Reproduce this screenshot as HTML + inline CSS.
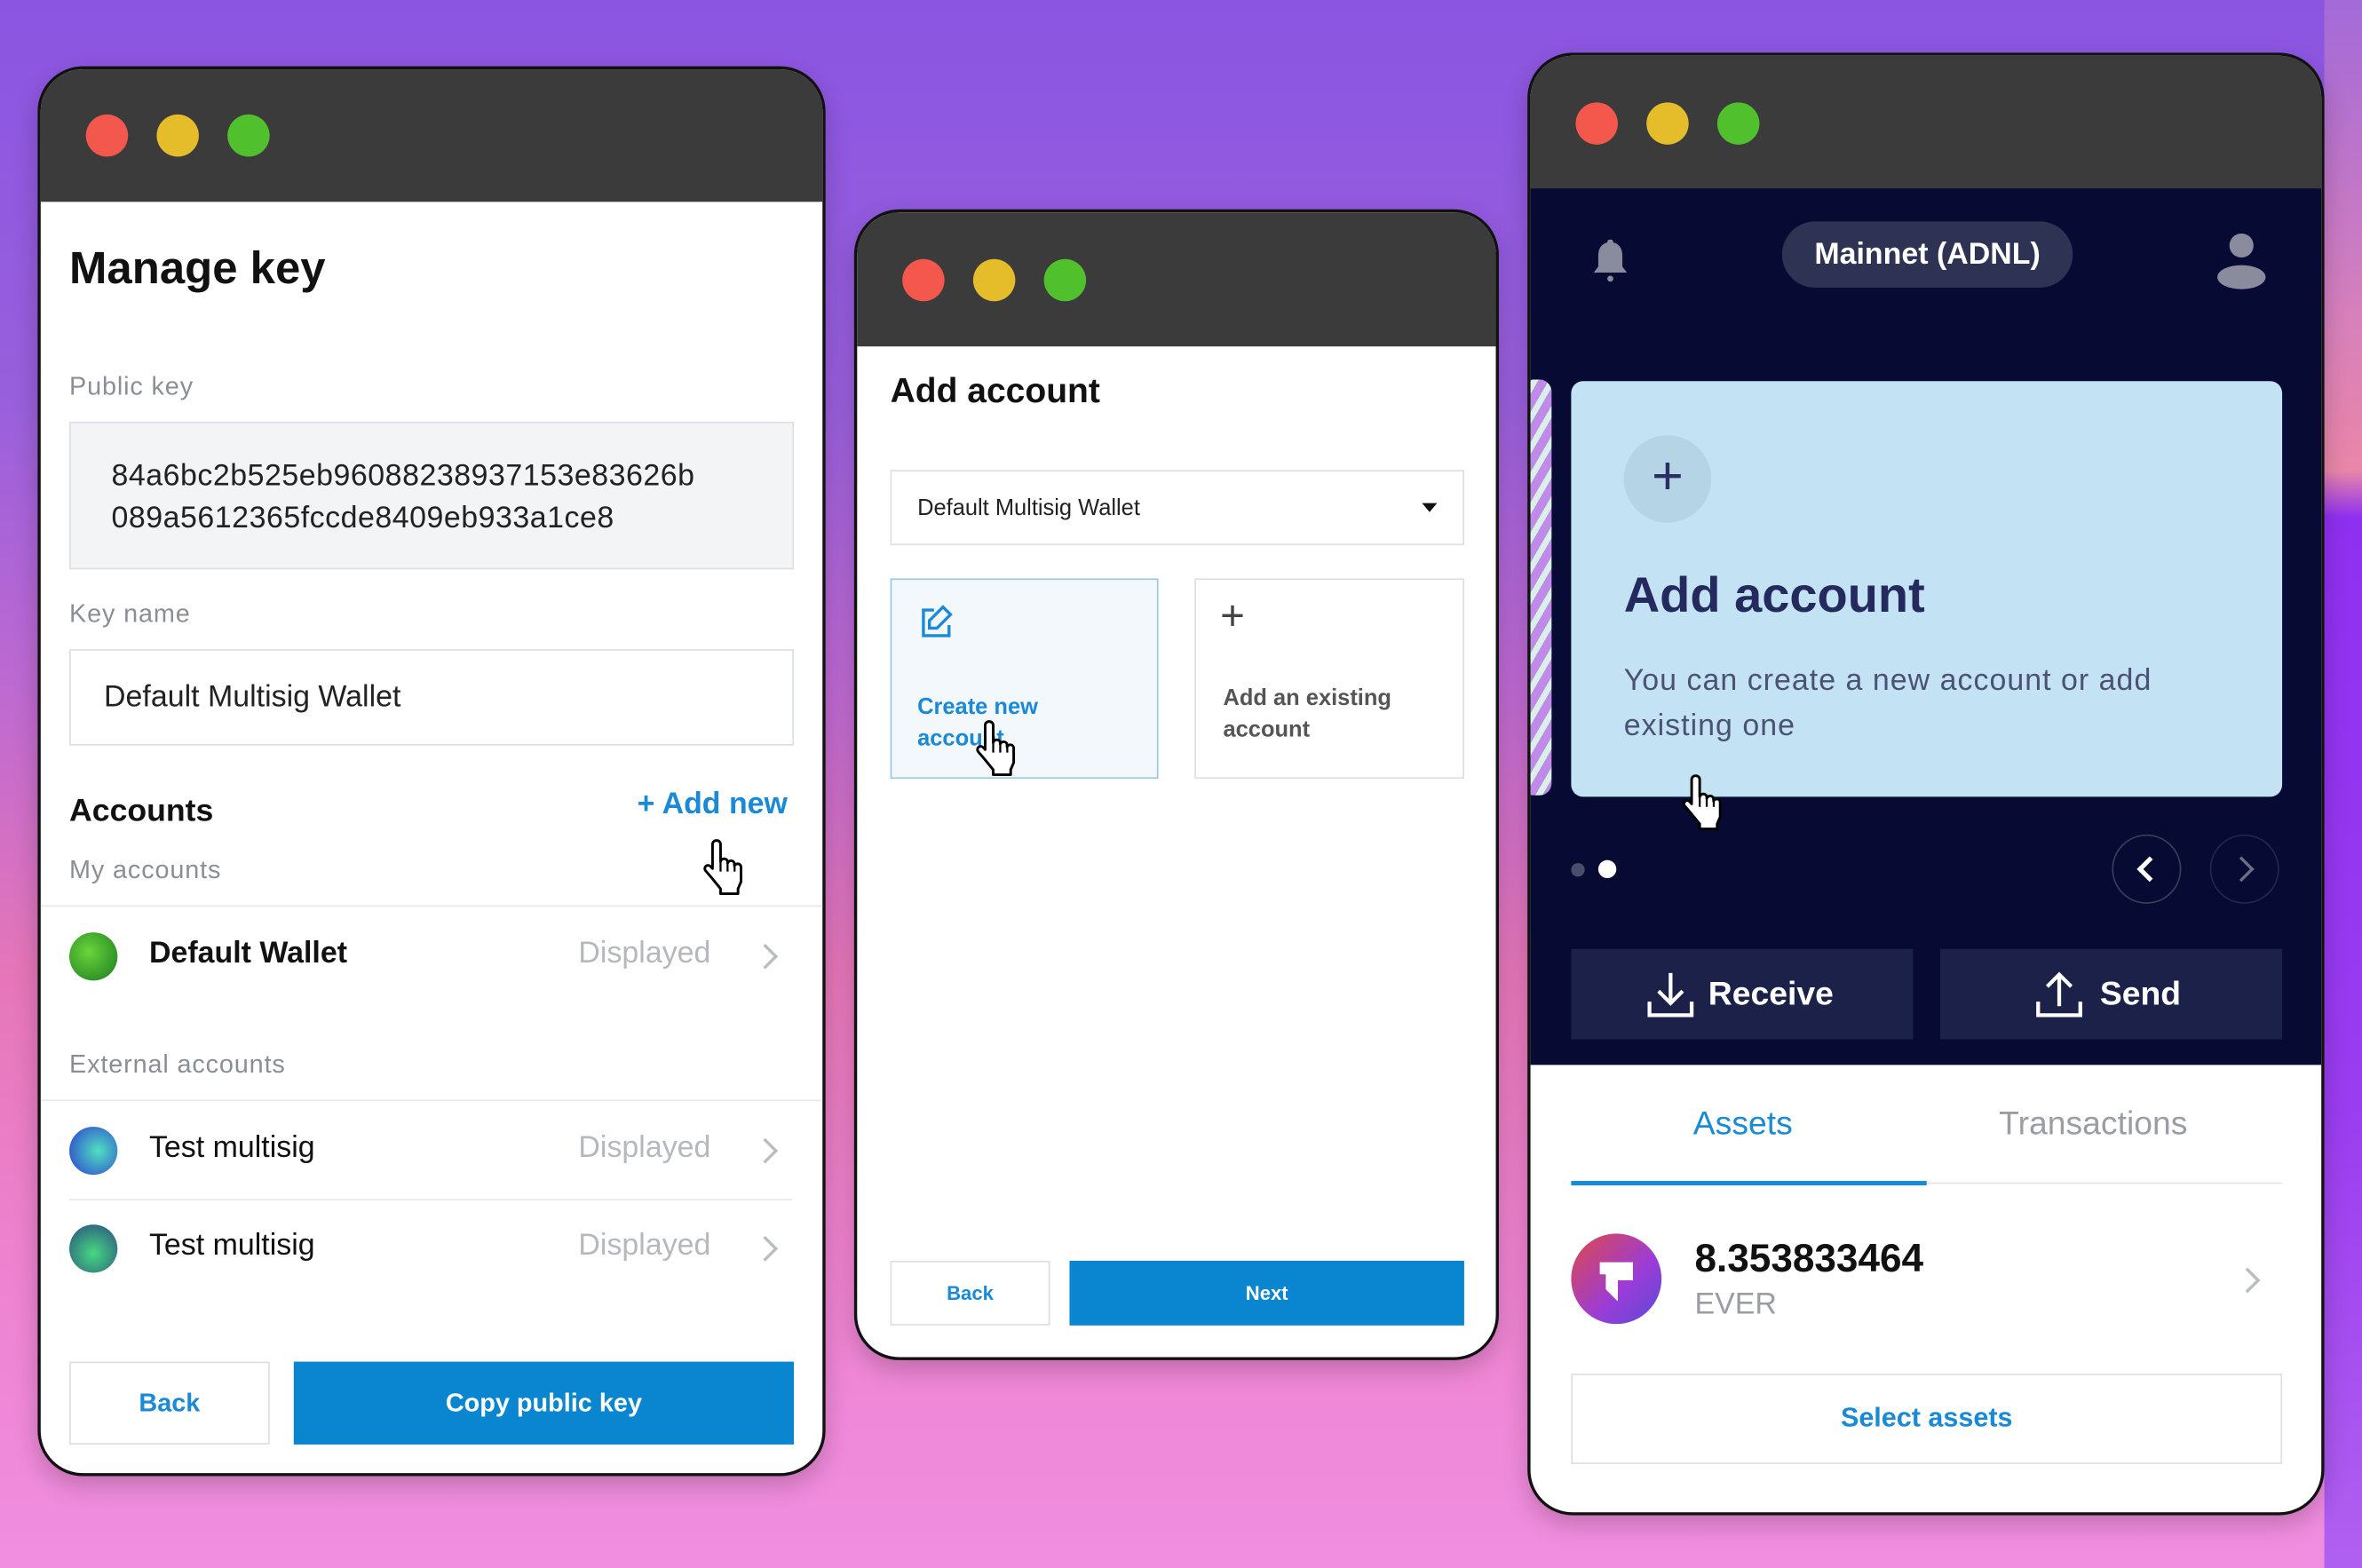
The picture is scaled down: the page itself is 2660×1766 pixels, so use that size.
<!DOCTYPE html>
<html><head><meta charset="utf-8"><style>
*{box-sizing:border-box;margin:0;padding:0}
html,body{width:2660px;height:1766px;overflow:hidden}
body{font-family:"Liberation Sans","DejaVu Sans",sans-serif}
#s{position:absolute;left:0;top:0;width:1568px;height:1041px;transform:scale(1.69643,1.69645);transform-origin:0 0;
background:linear-gradient(180deg,#8b55e2 0%,#985fdc 25%,#c06ad0 45%,#e576b8 62%,#ee82cf 80%,#f08ee0 100%);overflow:hidden}
.a{position:absolute}
.win{position:absolute;border:2px solid #111;border-radius:30px;overflow:hidden;background:#fff;box-shadow:0 6px 16px rgba(0,0,0,.2)}
.hdr{position:absolute;left:0;top:0;right:0;background:#3b3b3b}
.dot{position:absolute;width:28px;height:28px;border-radius:50%}
.r{background:#f4574c}.y{background:#e5bd2b}.g{background:#50c12d}
.t{position:absolute;white-space:nowrap}
.lbl{color:#8a8f96;font-size:17px;letter-spacing:.5px}
.row{position:absolute;left:0;right:0;border-top:1px solid #e5e7ea}
.chev{position:absolute;width:12px;height:12px;border-right:2.5px solid #b9bdc2;border-top:2.5px solid #b9bdc2;transform:rotate(45deg)}
.av{position:absolute;width:32px;height:32px;border-radius:50%}
</style></head><body><div id="s">
<div class="a" style="left:1543px;top:0;width:25px;height:1041px;background:linear-gradient(180deg,#a36ad8 0%,#d680bc 20%,#ea86a8 30%,#8e30f0 33%,#9a3cf0 70%,#b060f0 100%)"></div>

<svg width="0" height="0" style="position:absolute"><defs><symbol id="hand" viewBox="0 0 22 30"><path d="M7 1.5c1.2 0 2 .8 2 2V12c.3-1 1-1.4 1.8-1.4 1 0 1.7.7 1.7 1.7v.5c.3-.8 1-1.2 1.7-1.2 1 0 1.7.7 1.7 1.7v.8c.3-.6.9-1 1.6-1 1 0 1.7.8 1.7 1.8V22l-1.5 3.5V28H9v-2.5L4.5 20 1.5 16.5c-.6-.8-.4-1.8.3-2.3.7-.5 1.7-.4 2.3.3L5 15.5V3.5c0-1.2.8-2 2-2z" fill="#fff" stroke="#000" stroke-width="1.3" stroke-linejoin="round"/><path d="M9 12v5M12.5 13v4M16 14v3" stroke="#000" stroke-width="1"/></symbol></defs></svg>

<!-- Window 1 -->
<div class="win" style="left:25px;top:44px;width:523px;height:936px">
 <div class="hdr" style="height:88px"></div>
 <div class="dot r" style="left:30px;top:30px"></div><div class="dot y" style="left:77px;top:30px"></div><div class="dot g" style="left:124px;top:30px"></div>
 <div class="t" style="left:19px;top:116px;font-size:30px;font-weight:bold;color:#111">Manage key</div>
 <div class="t lbl" style="left:19px;top:201px">Public key</div>
 <div class="a" style="left:19px;top:234px;width:481px;height:98px;background:#f3f4f5;border:1px solid #dcdfe3"></div>
 <div class="t" style="left:47px;top:256px;font-size:20px;color:#222;line-height:28px;letter-spacing:.3px">84a6bc2b525eb96088238937153e83626b<br>089a5612365fccde8409eb933a1ce8</div>
 <div class="t lbl" style="left:19px;top:352px">Key name</div>
 <div class="a" style="left:19px;top:385px;width:481px;height:64px;border:1px solid #dcdfe3"></div>
 <div class="t" style="left:42px;top:406px;font-size:20px;color:#222">Default Multisig Wallet</div>
 <div class="t" style="left:19px;top:481px;font-size:21px;font-weight:bold;color:#111">Accounts</div>
 <div class="t" style="left:396px;top:477px;font-size:20px;color:#1a8ad6;font-weight:bold">+ Add new</div>
 <svg class="a" style="left:437px;top:510px" width="34" height="40"><use href="#hand"/></svg>
 <div class="t lbl" style="left:19px;top:522px">My accounts</div>
 <div class="row" style="top:555px"></div>
 <div class="av" style="left:19px;top:573px;background:radial-gradient(circle at 40% 40%,#6ad43a,#1a7a20)"></div>
 <div class="t" style="left:72px;top:576px;font-size:20px;font-weight:bold;color:#111">Default Wallet</div>
 <div class="t" style="left:357px;top:576px;font-size:20px;color:#b5b9be">Displayed</div>
 <div class="chev" style="left:475px;top:583px"></div>
 <div class="t lbl" style="left:19px;top:651px">External accounts</div>
 <div class="row" style="top:684px"></div>
 <div class="av" style="left:19px;top:702px;background:radial-gradient(circle at 60% 50%,#4fe0c0,#2a3ad0)"></div>
 <div class="t" style="left:72px;top:705px;font-size:20px;color:#111">Test multisig</div>
 <div class="t" style="left:357px;top:705px;font-size:20px;color:#b5b9be">Displayed</div>
 <div class="chev" style="left:475px;top:712px"></div>
 <div class="row" style="top:750px;left:19px;right:20px"></div>
 <div class="av" style="left:19px;top:767px;background:radial-gradient(circle at 50% 60%,#45d880,#2a4a80)"></div>
 <div class="t" style="left:72px;top:770px;font-size:20px;color:#111">Test multisig</div>
 <div class="t" style="left:357px;top:770px;font-size:20px;color:#b5b9be">Displayed</div>
 <div class="chev" style="left:475px;top:777px"></div>
 <div class="a" style="left:19px;top:858px;width:133px;height:55px;border:1px solid #dcdfe3;color:#1a8ad6;font-weight:bold;font-size:17px;text-align:center;line-height:53px">Back</div>
 <div class="a" style="left:168px;top:858px;width:332px;height:55px;background:#0a86d1;color:#fff;font-weight:bold;font-size:17px;text-align:center;line-height:55px">Copy public key</div>
</div>

<!-- Window 2 -->
<div class="win" style="left:567px;top:139px;width:428px;height:764px">
 <div class="hdr" style="height:89px"></div>
 <div class="dot r" style="left:30px;top:31px"></div><div class="dot y" style="left:77px;top:31px"></div><div class="dot g" style="left:124px;top:31px"></div>
 <div class="t" style="left:22px;top:105px;font-size:23px;font-weight:bold;color:#111">Add account</div>
 <div class="a" style="left:22px;top:171px;width:381px;height:50px;border:1px solid #dcdfe3"></div>
 <div class="t" style="left:40px;top:188px;font-size:15px;color:#222">Default Multisig Wallet</div>
 <div class="a" style="left:375px;top:193px;border-left:5px solid transparent;border-right:5px solid transparent;border-top:6px solid #111"></div>
 <div class="a" style="left:22px;top:243px;width:178px;height:133px;background:#f3f8fc;border:1px solid #9cc8e8"></div>
 <svg class="a" style="left:40px;top:259px" width="26" height="26" viewBox="0 0 26 26" fill="none" stroke="#1a8ad6" stroke-width="2"><path d="M11 5H4v17h17v-7"/><path d="M17 3l5 5-9 9H8v-5z"/></svg>
 <div class="t" style="left:40px;top:318px;font-size:15px;font-weight:bold;color:#1a8ad6;line-height:21px">Create new<br>account</div>
 <svg class="a" style="left:76px;top:336px" width="34" height="40"><use href="#hand"/></svg>
 <div class="a" style="left:224px;top:243px;width:179px;height:133px;border:1px solid #dcdfe3"></div>
 <div class="t" style="left:241px;top:252px;font-size:28px;color:#444;font-weight:300">+</div>
 <div class="t" style="left:243px;top:312px;font-size:15px;font-weight:bold;color:#555;line-height:21px">Add an existing<br>account</div>
 <div class="a" style="left:22px;top:696px;width:106px;height:43px;border:1px solid #dcdfe3;color:#1a8ad6;font-weight:bold;font-size:13px;text-align:center;line-height:41px">Back</div>
 <div class="a" style="left:141px;top:696px;width:262px;height:43px;background:#0a86d1;color:#fff;font-weight:bold;font-size:13px;text-align:center;line-height:43px">Next</div>
</div>

<!-- Window 3 -->
<div class="win" style="left:1014px;top:35px;width:529px;height:971px">
 <div class="hdr" style="height:88px"></div>
 <div class="dot r" style="left:30px;top:31px"></div><div class="dot y" style="left:77px;top:31px"></div><div class="dot g" style="left:124px;top:31px"></div>
 <div class="a" style="left:0;top:88px;right:0;height:582px;background:#070b33"></div>
 <svg class="a" style="left:40px;top:120px" width="26" height="32" viewBox="0 0 26 32" fill="#8a8c9e"><path d="M13 2c1.5 0 2 1 2 2 4 1 6 4 6 9v7l3 4H2l3-4v-7c0-5 2-8 6-9 0-1 .5-2 2-2z"/><circle cx="13" cy="28" r="2"/></svg>
 <div class="a" style="left:167px;top:110px;width:193px;height:44px;border-radius:22px;background:#2e3353;color:#fff;font-weight:bold;font-size:20px;text-align:center;line-height:44px">Mainnet (ADNL)</div>
 <svg class="a" style="left:454px;top:116px" width="36" height="40" viewBox="0 0 36 40" fill="#8a8c9e"><circle cx="18" cy="10" r="8"/><ellipse cx="18" cy="31" rx="16" ry="8"/></svg>
 <div class="a" style="left:-6px;top:215px;width:20px;height:276px;border-radius:8px;background:repeating-linear-gradient(120deg,#c08ae8 0 6px,#d8f0e8 6px 10px)"></div>
 <div class="a" style="left:27px;top:216px;width:472px;height:276px;border-radius:8px;background:#c3e2f3"></div>
 <div class="a" style="left:62px;top:252px;width:58px;height:58px;border-radius:50%;background:#b5d4e6;color:#2a2f62;font-size:36px;text-align:center;line-height:54px">+</div>
 <div class="t" style="left:62px;top:339px;font-size:33px;font-weight:bold;color:#252a5e">Add account</div>
 <div class="t" style="left:62px;top:400px;font-size:20px;color:#4c5274;line-height:30px;letter-spacing:.6px">You can create a new account or add<br>existing one</div>
 <svg class="a" style="left:98px;top:476px" width="34" height="40"><use href="#hand"/></svg>
 <div class="a" style="left:27px;top:536px;width:9px;height:9px;border-radius:50%;background:#4a4e6a"></div>
 <div class="a" style="left:45px;top:534px;width:12px;height:12px;border-radius:50%;background:#fff"></div>
 <div class="a" style="left:386px;top:517px;width:46px;height:46px;border-radius:50%;border:1.5px solid #3a3e5a"></div>
 <div class="a" style="left:405px;top:534px;width:12px;height:12px;border-left:3px solid #fff;border-bottom:3px solid #fff;transform:rotate(45deg)"></div>
 <div class="a" style="left:451px;top:517px;width:46px;height:46px;border-radius:50%;border:1.5px solid #23274a"></div>
 <div class="a" style="left:466px;top:534px;width:12px;height:12px;border-right:2.5px solid #6a6e86;border-top:2.5px solid #6a6e86;transform:rotate(45deg)"></div>
 <div class="a" style="left:27px;top:593px;width:227px;height:60px;background:#1b2148"></div>
 <div class="a" style="left:272px;top:593px;width:227px;height:60px;background:#1b2148"></div>
 <svg class="a" style="left:76px;top:606px" width="34" height="34" viewBox="0 0 34 34" fill="none" stroke="#fff" stroke-width="2.5"><path d="M17 3v20M9 15l8 8 8-8M3 22v9h28v-9"/></svg>
 <div class="t" style="left:118px;top:610px;font-size:22px;font-weight:bold;color:#fff">Receive</div>
 <svg class="a" style="left:334px;top:606px" width="34" height="34" viewBox="0 0 34 34" fill="none" stroke="#fff" stroke-width="2.5"><path d="M17 25V4M9 12l8-8 8 8M3 22v9h28v-9"/></svg>
 <div class="t" style="left:378px;top:610px;font-size:22px;font-weight:bold;color:#fff">Send</div>
 <div class="t" style="left:108px;top:696px;font-size:22px;color:#1a8ad6">Assets</div>
 <div class="t" style="left:311px;top:696px;font-size:22px;color:#9a9ea4">Transactions</div>
 <div class="a" style="left:27px;top:748px;width:472px;height:1px;background:#e2e4e7"></div>
 <div class="a" style="left:27px;top:747px;width:236px;height:3px;background:#1a8ad6"></div>
 <div class="a" style="left:27px;top:782px;width:60px;height:60px;border-radius:50%;background:linear-gradient(135deg,#e04848,#9a3cd8 60%,#5a4ad8)"></div>
 <svg class="a" style="left:40px;top:797px" width="34" height="32" viewBox="0 0 34 32"><path d="M6 4h22v12h-10v14l-8-8V12H6z" fill="#fff"/></svg>
 <div class="t" style="left:109px;top:783px;font-size:26px;font-weight:bold;color:#111">8.353833464</div>
 <div class="t" style="left:109px;top:818px;font-size:20px;color:#9a9ea4">EVER</div>
 <div class="a" style="left:470px;top:807px;width:12px;height:12px;border-right:2.5px solid #b9bdc2;border-top:2.5px solid #b9bdc2;transform:rotate(45deg)"></div>
 <div class="a" style="left:27px;top:875px;width:472px;height:60px;border:1.5px solid #dcdfe3;color:#1a8ad6;font-weight:bold;font-size:18px;text-align:center;line-height:57px">Select assets</div>
</div>
</div></body></html>
